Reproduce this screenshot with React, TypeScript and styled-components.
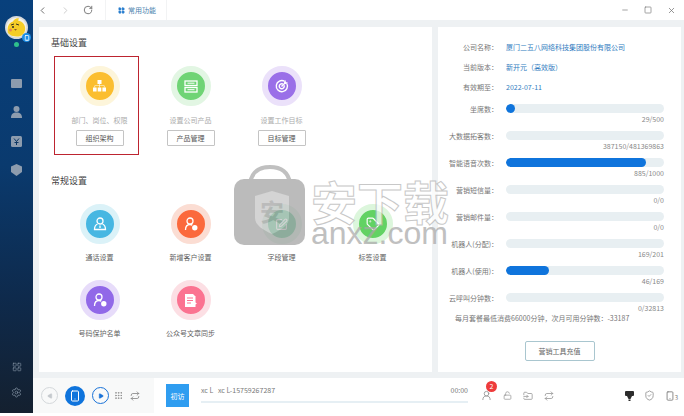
import React from 'react';
import styled, { createGlobalStyle } from 'styled-components';
import {
  ChevronLeft,
  ChevronRight,
  FolderInput,
  Grip,
  LayoutGrid,
  LockOpen,
  Minus,
  Play,
  Repeat,
  RotateCw,
  Settings,
  ShieldCheck,
  Smartphone,
  Square,
  SquarePen,
  Tag,
  UserRound,
  X,
} from 'lucide-react';

// Data for the two settings sections and the quota list
interface Tile {
  label: string;
  tone: string;
  ring: string;
  icon: React.ReactNode;
  action?: string;
}

interface Meter {
  label: string;
  count: string;
  percent: number;
}

const OrgIcon = () => (
  <svg width="13" height="12" viewBox="0 0 13 12" fill="#fff">
    <rect x="4.500" y="0" width="4" height="4" />
    <rect x="0" y="7.500" width="3.600" height="4" />
    <rect x="4.700" y="7.500" width="3.600" height="4" />
    <rect x="9.400" y="7.500" width="3.600" height="4" />
    <path d="M6.200 4h.6v1.500h4.700v2h-.6V6.100H6.800v1.400h-.6V6.100H2.100v1.400h-.6v-2h4.700z" />
  </svg>
);

const ProductIcon = () => (
  <svg width="14" height="13" viewBox="0 0 14 13" fill="none" stroke="#fff" strokeWidth="1.300">
    <rect x="1" y="1" width="12" height="4.500" />
    <rect x="1" y="7.500" width="12" height="4.500" />
    <path d="M3.500 3.200h7M3.500 9.700h7" strokeWidth="1" />
  </svg>
);

const GoalIcon = () => (
  <svg width="14" height="14" viewBox="0 0 14 14" fill="none" stroke="#fff" strokeWidth="1.400">
    <path d="M9.500 2.200A5.600 5.600 0 1 0 11.800 4.500" />
    <path d="M7.800 5A2.500 2.500 0 1 0 9 6.200" />
    <path d="M6.500 7.500L11 3" />
    <path d="M10.500 1l.3 2.200 2.200.3-1.800 1.500-2-.3-.2-2z" fill="#fff" stroke="none" />
  </svg>
);

const ContactIcon = () => (
  <svg width="14" height="14" viewBox="0 0 14 14" fill="none" stroke="#fff" strokeWidth="1.300">
    <circle cx="7" cy="4" r="3" />
    <path d="M4.500 7C2.500 7.800 1.500 9.500 1.500 12.500h11c0-3-1-4.700-3-5.500" />
    <path d="M7 8.500v2.500" />
  </svg>
);

const PersonBadgeIcon = () => (
  <svg width="14" height="14" viewBox="0 0 14 14" fill="none" stroke="#fff" strokeWidth="1.300">
    <circle cx="6" cy="4" r="3" />
    <path d="M1.500 13c0-3.500 1.500-5.500 4.500-5.500 1 0 1.700.2 2.300.6" />
    <circle cx="10.800" cy="10.800" r="2.700" fill="#fff" stroke="none" />
  </svg>
);

const ArticleIcon = ({ lineColor }: { lineColor: string }) => (
  <svg width="12" height="13" viewBox="0 0 12 13">
    <path d="M0 0h8l2.500 2.500V13H0z" fill="#fff" />
    <path d="M2 4h6M2 6.500h6M2 9h4" stroke={lineColor} strokeWidth="1" />
    <path d="M8.500 7.500L12 9.500l-3.500 2z" fill="#fff" />
  </svg>
);

const baseTiles: Tile[] = [
  { label: '部门、岗位、权限', tone: '#fbbe2f', ring: '#fdf5da', icon: <OrgIcon />, action: '组织架构' },
  { label: '设置公司产品', tone: '#6fd475', ring: '#e2f6e3', icon: <ProductIcon />, action: '产品管理' },
  { label: '设置工作目标', tone: '#9a6fe8', ring: '#ebe1fa', icon: <GoalIcon />, action: '目标管理' },
];

const commonTiles: Tile[] = [
  { label: '通话设置', tone: '#47b7e2', ring: '#dbf2f8', icon: <ContactIcon /> },
  { label: '新增客户设置', tone: '#fb693c', ring: '#fbddd3', icon: <PersonBadgeIcon /> },
  { label: '字段管理', tone: '#58c98e', ring: '#ddf3e6', icon: <SquarePen size={13} color="#fff" /> },
  { label: '标签设置', tone: '#62d263', ring: '#dcf6dc', icon: <Tag size={14} color="#fff" /> },
  { label: '号码保护名单', tone: '#9168e8', ring: '#e7dcfa', icon: <PersonBadgeIcon /> },
  { label: '公众号文章同步', tone: '#fb7391', ring: '#fcdfe4', icon: <ArticleIcon lineColor="#fb7391" /> },
];

const meters: Meter[] = [
  { label: '坐席数', count: '29/500', percent: 5.8 },
  { label: '大数据拓客数', count: '387150/481369863', percent: 0 },
  { label: '智能语音次数', count: '885/1000', percent: 88.5 },
  { label: '营销短信量', count: '0/0', percent: 0 },
  { label: '营销邮件量', count: '0/0', percent: 0 },
  { label: '机器人(分配)', count: '169/201', percent: 0 },
  { label: '机器人(使用)', count: '46/169', percent: 27 },
  { label: '云呼叫分钟数', count: '0/32813', percent: 0 },
];

const Chick = () => (
  <svg width="23" height="23" viewBox="0 0 23 23">
    <circle cx="11.500" cy="11.500" r="11.500" fill="#d5d9dd" />
    <circle cx="11.500" cy="11.500" r="9.800" fill="#f4f1e6" />
    <path d="M3 17c-1-5 0-10 5-11.500 1-2.500 4-4 6-3l-1 2c5 1 8 5 7 10-1 4-4 6-8 6-4 0-7-1-9-3.500z" fill="#f5cd27" />
    <path d="M6 9l3-1M11 8l3 1" stroke="#3a3320" strokeWidth="1" />
    <circle cx="8" cy="11" r="1" fill="#2a2a2a" />
    <path d="M9 13h3l-1.500 1.800z" fill="#8a5a2a" />
    <circle cx="5.500" cy="14" r="1.500" fill="#e98850" />
  </svg>
);

const WatermarkBag = () => (
  <svg width="72" height="80" viewBox="0 0 72 80">
    <path d="M16 18C18 6 26 2 36 2s18 4 20 16" fill="none" stroke="#a9a9a9" strokeWidth="4" />
    <rect x="0" y="14" width="71" height="66" rx="10" fill="#a2a2a2" />
    <path d="M21 31l17-5 17 5v22c0 7-8 12-17 16-9-4-17-9-17-16z" fill="#c4c4c4" />
    <text x="38" y="56" fontSize="24" fontWeight="700" textAnchor="middle" fill="#a2a2a2">
      安
    </text>
  </svg>
);

const App: React.FC = () => {
  return (
    <>
      <GlobalStyle />
      <Shell>
        <Sidebar>
          <SideGroup>
            <AvatarWrap>
              <Chick />
              <AvatarBadge>
                <Smartphone size={6} color="#fff" strokeWidth={3} />
              </AvatarBadge>
            </AvatarWrap>
            <OnlineDot />
            <SideNav>
              <SideIcon>
                <svg width="11" height="9" viewBox="0 0 11 9"><rect width="11" height="9" rx="1" fill="currentColor" /></svg>
              </SideIcon>
              <SideIcon>
                <svg width="11" height="12" viewBox="0 0 11 12" fill="currentColor"><circle cx="5.500" cy="3" r="3" /><path d="M0 12c0-4 2-5.500 5.500-5.500S11 8 11 12z" /></svg>
              </SideIcon>
              <SideIcon>
                <svg width="11" height="11" viewBox="0 0 11 11">
                  <rect width="11" height="11" rx="1.500" fill="currentColor" />
                  <path d="M3 2.500l2.500 3 2.500-3M5.500 5.500V9M3.500 6.500h4" stroke="#0b3563" fill="none" />
                </svg>
              </SideIcon>
              <SideIcon>
                <svg width="11" height="12" viewBox="0 0 11 12" fill="currentColor"><path d="M5.500 0L11 2.500V8l-5.500 4L0 8V2.500z" /></svg>
              </SideIcon>
            </SideNav>
          </SideGroup>
          <SideFoot>
            <LayoutGrid size={10} strokeWidth={1.4} />
            <Settings size={11} strokeWidth={1.4} />
          </SideFoot>
        </Sidebar>

        <Main>
          <TopBar>
            <NavButtons>
              <ChevronLeft size={11} color="#666" />
              <ChevronRight size={11} color="#c8c8c8" />
              <RotateCw size={10} color="#666" />
            </NavButtons>
            <FavTab>
              <LayoutGrid size={7} color="#2b7fd0" fill="#2b7fd0" />
              常用功能
            </FavTab>
            <WindowButtons>
              <Minus size={8} />
              <Square size={8} />
              <X size={9} />
            </WindowButtons>
          </TopBar>

          <Content>
            <SettingsPanel>
              <SectionTitle>基础设置</SectionTitle>
              <TileGrid>
                <Highlight />
                {baseTiles.map((tile) => (
                  <TileItem key={tile.label}>
                    <Badge $tone={tile.tone} $ring={tile.ring}>{tile.icon}</Badge>
                    <Caption $muted>{tile.label}</Caption>
                    <ActionButton>{tile.action}</ActionButton>
                  </TileItem>
                ))}
              </TileGrid>
              <SectionTitle $spaced>常规设置</SectionTitle>
              <TileGrid>
                {commonTiles.map((tile) => (
                  <TileItem key={tile.label}>
                    <Badge $tone={tile.tone} $ring={tile.ring}>{tile.icon}</Badge>
                    <Caption>{tile.label}</Caption>
                  </TileItem>
                ))}
              </TileGrid>
            </SettingsPanel>

            <InfoPanel>
              <InfoRow>
                <RowLabel>公司名称：</RowLabel>
                <InfoValue>厦门二五八网络科技集团股份有限公司</InfoValue>
              </InfoRow>
              <InfoRow>
                <RowLabel>当前版本：</RowLabel>
                <InfoValue>新开元（高效版）</InfoValue>
              </InfoRow>
              <InfoRow>
                <RowLabel>有效期至：</RowLabel>
                <InfoValue>2022-07-11</InfoValue>
              </InfoRow>
              <MeterList>
                {meters.map((meter) => (
                  <MeterRow key={meter.label}>
                    <RowLabel>{meter.label}：</RowLabel>
                    <MeterTrack>
                      {meter.percent > 0 && <MeterFill style={{ width: `${meter.percent}%` }} />}
                    </MeterTrack>
                    <MeterCount>{meter.count}</MeterCount>
                  </MeterRow>
                ))}
              </MeterList>
              <PackageNote>每月套餐最低消费66000分钟，次月可用分钟数：-33187</PackageNote>
              <RechargeButton>营销工具充值</RechargeButton>
            </InfoPanel>
          </Content>

          <CallBar>
            <CallControls>
              <PrevButton>
                <Play size={6} color="#c4c9cd" fill="#c4c9cd" style={{ transform: 'rotate(180deg)' }} />
              </PrevButton>
              <PhoneButton>
                <Smartphone size={12} color="#fff" />
              </PhoneButton>
              <NextButton>
                <Play size={6} color="#1a73d8" fill="#1a73d8" />
              </NextButton>
              <ControlTools>
                <Grip size={9} color="#888" />
                <Repeat size={10} color="#888" />
              </ControlTools>
            </CallControls>
            <VisitTag>初访</VisitTag>
            <CallInfo>
              <CallTexts>
                <span>xc L&nbsp;&nbsp;&nbsp;xc L-15759267287</span>
                <span>00:00</span>
              </CallTexts>
              <CallProgress />
            </CallInfo>
            <CallTools>
              <ToolWithBadge>
                <UserRound size={11} />
                <RedBadge>2</RedBadge>
              </ToolWithBadge>
              <LockOpen size={9} />
              <FolderInput size={10} />
              <Repeat size={10} />
            </CallTools>
            <StatusIcons>
              <svg width="9" height="10" viewBox="0 0 9 10" fill="#2c2c2c">
                <rect x="0" y="0" width="9" height="5" rx="1" />
                <path d="M2 5h5L5.500 8h-2z" />
                <rect x="3.500" y="8.500" width="2" height="1.500" />
              </svg>
              <ShieldCheck size={11} />
              <LineCount>
                <Smartphone size={10} />3
              </LineCount>
            </StatusIcons>
          </CallBar>
        </Main>

        <Watermark aria-hidden>
          <WatermarkBag />
          <WatermarkText>
            <WatermarkCn>安下载</WatermarkCn>
            <WatermarkEn>anxz.com</WatermarkEn>
          </WatermarkText>
        </Watermark>
      </Shell>
    </>
  );
};

export default App;

const GlobalStyle = createGlobalStyle`
  html, body {
    margin: 0;
    background: #fff;
    font-family: "Noto Sans CJK SC", "Noto Sans", sans-serif;
  }
  * {
    box-sizing: border-box;
  }
`;

const Shell = styled.div`
  position: relative;
  width: 684px;
  height: 413px;
  display: flex;
  overflow: hidden;
`;

const Sidebar = styled.aside`
  width: 33px;
  flex: none;
  display: flex;
  flex-direction: column;
  justify-content: space-between;
  align-items: center;
  padding: 16px 0 15px;
  color: #8d9cae;
  background: linear-gradient(180deg, #08407c 0%, #0a3a6e 40%, #0e2a4c 72%, #14202f 100%);
`;

const SideGroup = styled.div`
  display: flex;
  flex-direction: column;
  align-items: center;
`;

const AvatarWrap = styled.div`
  position: relative;
  width: 23px;
  height: 23px;
`;

const AvatarBadge = styled.div`
  position: absolute;
  right: -3px;
  bottom: -3px;
  width: 9px;
  height: 9px;
  border-radius: 50%;
  background: #1d8fe8;
  display: flex;
  align-items: center;
  justify-content: center;
`;

const OnlineDot = styled.div`
  width: 5px;
  height: 5px;
  margin-top: 3px;
  border-radius: 50%;
  background: #2fc08c;
`;

const SideNav = styled.nav`
  display: flex;
  flex-direction: column;
  align-items: center;
  margin-top: 29px;
  gap: 15px;
`;

const SideIcon = styled.div`
  height: 14px;
  display: flex;
  align-items: center;
  justify-content: center;
`;

const SideFoot = styled.div`
  display: flex;
  flex-direction: column;
  align-items: center;
  gap: 15px;
`;

const Main = styled.div`
  flex: 1;
  min-width: 0;
  display: flex;
  flex-direction: column;
  background: #eef1f3;
`;

const TopBar = styled.header`
  height: 20px;
  flex: none;
  display: flex;
  align-items: center;
  background: #fff;
`;

const NavButtons = styled.div`
  width: 73px;
  height: 100%;
  display: flex;
  align-items: center;
  justify-content: space-between;
  padding: 0 12px 0 4px;
  border-right: 1px solid #f2f3f4;
`;

const FavTab = styled.div`
  width: 61px;
  height: 100%;
  display: flex;
  align-items: center;
  gap: 3px;
  padding-left: 12px;
  font-size: 7px;
  color: #4c7fae;
  border-right: 1px solid #f2f3f4;
`;

const WindowButtons = styled.div`
  margin-left: auto;
  display: flex;
  align-items: center;
  gap: 15px;
  padding-right: 8px;
  color: #777;
`;

const Content = styled.main`
  flex: 1;
  min-height: 0;
  display: flex;
  gap: 6px;
  padding: 7px 3px 6px 6px;
`;

const SettingsPanel = styled.section`
  flex: 1;
  background: #fff;
  padding: 9px 0 0 15px;
`;

const SectionTitle = styled.h2<{ $spaced?: boolean }>`
  margin: ${(p) => (p.$spaced ? '28px' : '0')} 0 16px -3px;
  font-size: 9px;
  line-height: 14px;
  font-weight: 400;
  color: #444;
`;

const TileGrid = styled.div`
  position: relative;
  display: grid;
  grid-template-columns: repeat(4, 91px);
  row-gap: 18px;
`;

const Highlight = styled.div`
  position: absolute;
  left: 0;
  top: -10px;
  width: 85px;
  height: 99px;
  border: 1.5px solid #bd2430;
`;

const TileItem = styled.div`
  display: flex;
  flex-direction: column;
  align-items: center;
`;

const Badge = styled.div<{ $tone: string; $ring: string }>`
  width: 40px;
  height: 40px;
  border-radius: 50%;
  display: flex;
  align-items: center;
  justify-content: center;
  background: ${(p) => p.$tone};
  border: 6px solid ${(p) => p.$ring};
`;

const Caption = styled.div<{ $muted?: boolean }>`
  margin-top: ${(p) => (p.$muted ? '9px' : '8px')};
  font-size: 7px;
  line-height: 10px;
  white-space: nowrap;
  color: ${(p) => (p.$muted ? '#ababab' : '#5f5f5f')};
`;

const ActionButton = styled.button`
  width: 48px;
  height: 16px;
  margin-top: 5px;
  padding: 0;
  font: inherit;
  font-size: 7px;
  color: #555;
  background: #fff;
  border: 1px solid #c4c4c4;
  border-radius: 1px;
`;

const InfoPanel = styled.aside`
  width: 243px;
  flex: none;
  display: flex;
  flex-direction: column;
  background: #fff;
  padding-top: 10px;
`;

const InfoRow = styled.div`
  display: grid;
  grid-template-columns: 60px 1fr;
  column-gap: 8px;
  height: 20px;
  align-items: center;
`;

const RowLabel = styled.span`
  font-size: 7px;
  text-align: right;
  white-space: nowrap;
  color: #777;
`;

const InfoValue = styled.span`
  font-size: 7px;
  color: #2f7cc0;
  white-space: nowrap;
`;

const MeterList = styled.div`
  display: flex;
  flex-direction: column;
  gap: 7px;
  margin-top: 7px;
`;

const MeterRow = styled.div`
  display: grid;
  grid-template-columns: 60px 158px;
  column-gap: 8px;
  row-gap: 1px;
  grid-template-rows: 9px 10px;
  align-items: center;
`;

const MeterTrack = styled.div`
  height: 9px;
  border-radius: 5px;
  background: #e8eff2;
  overflow: hidden;
`;

const MeterFill = styled.div`
  height: 100%;
  border-radius: 5px;
  background: #0f74dc;
`;

const MeterCount = styled.div`
  grid-column: 2;
  font-size: 7px;
  line-height: 10px;
  text-align: right;
  color: #888;
`;

const PackageNote = styled.div`
  margin: 0 0 0 17px;
  font-size: 7px;
  line-height: 10px;
  color: #777;
  white-space: nowrap;
`;

const RechargeButton = styled.button`
  align-self: center;
  width: 70px;
  height: 20px;
  margin-top: 18px;
  padding: 0;
  font: inherit;
  font-size: 7px;
  color: #666;
  background: #fff;
  border: 1px solid #a9c6cf;
  border-radius: 2px;
`;

const CallBar = styled.footer`
  height: 35px;
  flex: none;
  display: flex;
  align-items: center;
  background: #fff;
`;

const CallControls = styled.div`
  width: 121px;
  height: 100%;
  flex: none;
  display: flex;
  align-items: center;
  gap: 7px;
  padding-left: 8px;
  background: #f8f9f9;
`;

const ControlTools = styled.div`
  display: flex;
  align-items: center;
  gap: 7px;
  margin-left: -2px;
`;

const PrevButton = styled.div`
  width: 17px;
  height: 17px;
  border-radius: 50%;
  border: 1px solid #d4d8db;
  display: flex;
  align-items: center;
  justify-content: center;
`;

const PhoneButton = styled.div`
  width: 20px;
  height: 20px;
  border-radius: 50%;
  background: #0f74dc;
  display: flex;
  align-items: center;
  justify-content: center;
`;

const NextButton = styled.div`
  width: 17px;
  height: 17px;
  border-radius: 50%;
  border: 1px solid #1a73d8;
  display: flex;
  align-items: center;
  justify-content: center;
`;

const VisitTag = styled.div`
  width: 23px;
  height: 23px;
  flex: none;
  margin-left: 12px;
  display: flex;
  align-items: center;
  justify-content: center;
  font-size: 7px;
  color: #fff;
  background: #2f9df0;
`;

const CallInfo = styled.div`
  width: 267px;
  flex: none;
  margin: 0 0 3px 12px;
`;

const CallTexts = styled.div`
  display: flex;
  justify-content: space-between;
  font-size: 7px;
  line-height: 10px;
  color: #777;
`;

const CallProgress = styled.div`
  height: 2px;
  margin-top: 6px;
  background: #e6eff4;
`;

const CallTools = styled.div`
  display: flex;
  align-items: center;
  gap: 11px;
  margin-left: 13px;
  color: #9a9a9a;
`;

const ToolWithBadge = styled.div`
  position: relative;
  display: flex;
`;

const RedBadge = styled.span`
  position: absolute;
  left: 5px;
  top: -9px;
  width: 11px;
  height: 11px;
  border-radius: 50%;
  background: #ee3b3b;
  color: #fff;
  font-size: 7px;
  line-height: 11px;
  text-align: center;
`;

const StatusIcons = styled.div`
  margin-left: auto;
  display: flex;
  align-items: center;
  gap: 10px;
  padding-right: 6px;
  color: #9a9a9a;
`;

const LineCount = styled.span`
  display: flex;
  align-items: flex-end;
  font-size: 6px;
  line-height: 7px;
  color: #777;
`;

const Watermark = styled.div`
  position: absolute;
  left: 234px;
  top: 165px;
  display: flex;
  align-items: flex-start;
  gap: 5px;
  opacity: 0.72;
  pointer-events: none;
`;

const WatermarkText = styled.div`
  display: flex;
  flex-direction: column;
  margin-top: 10px;
`;

const WatermarkCn = styled.div`
  font-size: 46px;
  line-height: 50px;
  font-weight: 700;
  white-space: nowrap;
  color: #fff;
  -webkit-text-stroke: 1px #b4b4b4;
`;

const WatermarkEn = styled.div`
  margin-top: -5px;
  font-family: "Liberation Sans", sans-serif;
  font-size: 32px;
  line-height: 26px;
  color: #a8a8a8;
`;
